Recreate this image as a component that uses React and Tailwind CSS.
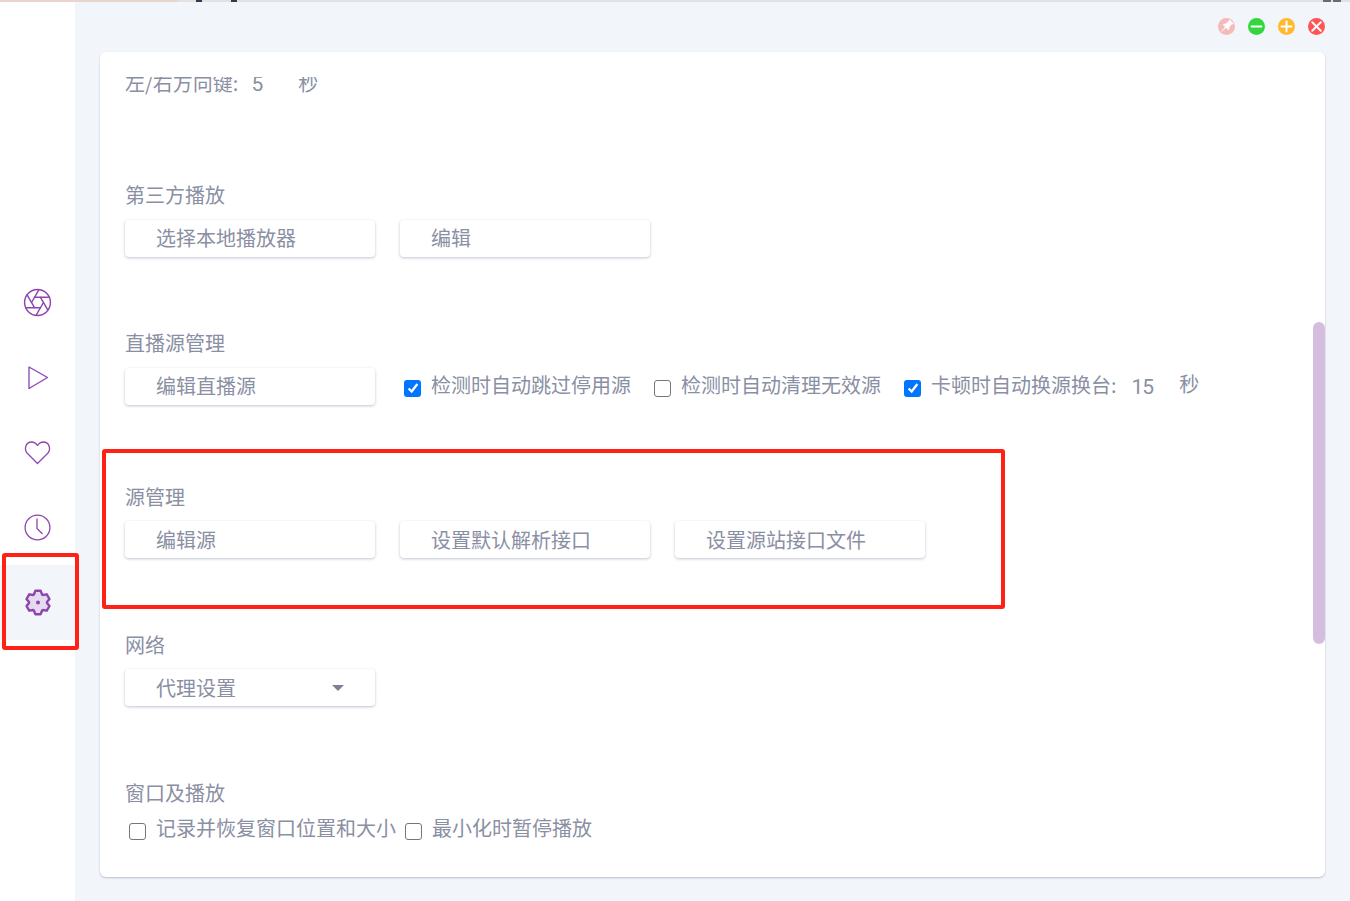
import { Aperture, Minus, Plus, X } from 'lucide-react';

const font = "font-['Noto_Sans_CJK_SC',sans-serif]";
const navColor = '#8e44ad';

// 6-tooth gear outline, centred on 14,14
const gearPath = () => {
  const pts = [];
  for (let i = 0; i < 6; i++) {
    const a = -90 + i * 60;
    [[9, -27], [12, -13], [12, 13], [9, 27]].forEach(([r, d]) => {
      const t = ((a + d) * Math.PI) / 180;
      pts.push(`${(14 + r * Math.cos(t)).toFixed(2)} ${(14 + r * Math.sin(t)).toFixed(2)}`);
    });
  }
  return `M${pts.join('L')}Z`;
};

const NavPlay = () => (
  <svg viewBox="0 0 27 27" className="h-[27px] w-[27px]" fill="none" stroke={navColor} strokeWidth="1.3">
    <path d="M5 3v21.5L23.5 13.5Z" strokeLinejoin="round" />
  </svg>
);

const NavHeart = () => (
  <svg viewBox="0 0 27 27" className="h-[27px] w-[27px]" fill="none" stroke={navColor} strokeWidth="1.3">
    <path d="M13.5 24.5 3 14C0 10.500 1.500 3 7.500 3c3 0 5 2 6 3.500C14.500 5 16.500 3 19.500 3c6 0 7.500 7.500 4.500 11Z" strokeLinejoin="round" />
  </svg>
);

const NavClock = () => (
  <svg viewBox="0 0 27 27" className="h-[27px] w-[27px]" fill="none" stroke={navColor} strokeWidth="1.3">
    <circle cx="13.5" cy="13.5" r="12.400" />
    <path d="M13 4.500v10l5.500 5.500" />
  </svg>
);

const NavAperture = () => <Aperture className="h-[31px] w-[31px]" color={navColor} strokeWidth={1.1} />;

const navItems = [NavAperture, NavPlay, NavHeart, NavClock];

const Button = ({ label, arrow, up }) => (
  <div className={`flex h-[37px] w-[250px] items-center rounded bg-white pl-[31px] text-[20px] leading-none text-[#8a8fa3] shadow-[0_1px_3px_rgba(100,110,140,0.4)] ${up ? 'pb-[2px]' : ''}`}>
    {label}
    {arrow && <span className="ml-auto mr-[31px] h-0 w-0 border-x-[6px] border-t-[6px] border-x-transparent border-t-[#7c8194]" />}
  </div>
);

const Check = ({ on, label }) => (
  <label className="flex items-center">
    {on ? (
      <span className="flex h-[17px] w-[17px] translate-y-[3px] items-center justify-center rounded-[3px] bg-[#0075ff]">
        <svg viewBox="0 0 16 16" className="h-[14px] w-[14px]" fill="none" stroke="white" strokeWidth="2.6">
          <path d="M3 8.500 6.500 12 13 3.500" />
        </svg>
      </span>
    ) : (
      <span className="h-[17px] w-[17px] translate-y-[3px] rounded-[3px] border border-[#767676] bg-white" />
    )}
    <span className="ml-[10px] text-[20px] leading-none text-[#8a8fa3]">{label}</span>
  </label>
);

const Section = ({ title, className, tight, children }) => (
  <div className={className}>
    <div className={`h-[25px] text-[20px] leading-[25px] text-[#8a8fa3] ${tight ? 'mb-[13px]' : 'mb-[12px]'}`}>{title}</div>
    {children}
  </div>
);

const WinButton = ({ color, children }) => (
  <div className={`flex h-[17px] w-[17px] items-center justify-center rounded-full ${color}`}>{children}</div>
);

export default function App() {
  return (
    <div className={`relative flex h-[901px] w-[1350px] flex-col overflow-hidden bg-[#f2f5f9] ${font}`}>
      {/* strip of the window behind */}
      <div className="flex h-[2px] shrink-0 bg-[#e2e2e4]">
        <div className="w-[179px] bg-[#e8d5cc]" />
        <div className="ml-[17px] w-[6px] bg-[#3a3550]" />
        <div className="ml-[29px] w-[6px] bg-[#3a3550]" />
        <div className="ml-auto w-[8px] bg-[#6a6a72]" />
        <div className="ml-[2px] mr-[9px] w-[8px] bg-[#6a6a72]" />
      </div>

      <div className="flex min-h-0 flex-1">
        <aside className="flex w-[75px] shrink-0 flex-col items-center bg-white pt-[263px]">
          {navItems.map((Icon, i) => (
            <div key={i} className="flex h-[75px] w-full items-center justify-center">
              <Icon />
            </div>
          ))}
          <div className="flex h-[75px] w-full items-center justify-center bg-[#f2f5f9]">
            <svg viewBox="0 0.5 28 28" className="h-[28px] w-[28px]" fill="#e6daf0" stroke={navColor} strokeWidth="2.4" strokeLinejoin="round">
              <path d={gearPath()} />
              <circle cx="14" cy="14" r="2" fill={navColor} stroke="none" />
            </svg>
          </div>
        </aside>

        <main className="flex min-w-0 flex-1 flex-col px-[25px]">
          <div className="flex h-[50px] shrink-0 items-center justify-end gap-[13px] pb-[1px]">
            <WinButton color="bg-[#f6b9b9]">
              <svg viewBox="0 0 17 17" className="h-[17px] w-[17px]" fill="white" stroke="white" strokeWidth="0.5">
                <g transform="rotate(45 8.5 8.5)">
                  <path d="M6 1.500h5V3h-.6l.6 4.500L12.500 9.500h-8L6 7.500 6.600 3H6ZM8 9.500h1L8.500 15.500Z" />
                </g>
              </svg>
            </WinButton>
            <WinButton color="bg-[#33d63f]">
              <Minus className="h-[17px] w-[17px] text-white" strokeWidth={2.800} />
            </WinButton>
            <WinButton color="bg-[#ffb92e]">
              <Plus className="h-[17px] w-[17px] text-white" strokeWidth={2.800} />
            </WinButton>
            <WinButton color="bg-[#ff5454]">
              <X className="h-[17px] w-[17px] text-white" strokeWidth={2.800} />
            </WinButton>
          </div>

          <div className="relative h-[825px] overflow-hidden rounded-md bg-white pl-[25px] shadow-[0_1px_2px_rgba(100,110,140,0.4)]">
            {/* first row is cut by the scroller's top edge */}
            <div className="mt-[25px] h-[20px] overflow-hidden">
              <div className="-mt-[7px] flex items-center text-[20px] leading-[25px] text-[#8a8fa3]">
                <span>左/右方向键:</span>
                <span className="ml-[13px] translate-y-[2px] font-['Roboto',sans-serif] text-[21px]">5</span>
                <span className="ml-[35px]">秒</span>
              </div>
            </div>

            <Section title="第三方播放" tight className="mt-[85px]">
              <div className="flex gap-[25px]">
                <Button up label="选择本地播放器" />
                <Button up label="编辑" />
              </div>
            </Section>

            <Section title="直播源管理" tight className="mt-[73px]">
              <div className="flex items-center">
                <Button up label="编辑直播源" />
                <div className="ml-[29px] mb-[3px] flex items-center gap-[23px]">
                  <Check on label="检测时自动跳过停用源" />
                  <Check label="检测时自动清理无效源" />
                  <div className="flex items-center">
                    <Check on label="卡顿时自动换源换台:" />
                    <span className="ml-[15px] mt-[4px] font-['Roboto',sans-serif] text-[21px] leading-none tracking-[-1px] text-[#8a8fa3]">15</span>
                    <span className="ml-[26px] mb-[2px] text-[20px] leading-none text-[#8a8fa3]">秒</span>
                  </div>
                </div>
              </div>
            </Section>

            <Section title="源管理" className="mt-[79px]">
              <div className="flex gap-[25px]">
                <Button label="编辑源" />
                <Button label="设置默认解析接口" />
                <Button label="设置源站接口文件" />
              </div>
            </Section>

            <Section title="网络" className="mt-[74px]">
              <Button label="代理设置" arrow />
            </Section>

            <Section title="窗口及播放" tight className="mt-[74px]">
              <div className="flex items-center gap-[9px] pl-[4px]">
                <Check label="记录并恢复窗口位置和大小" />
                <Check label="最小化时暂停播放" />
              </div>
            </Section>

            {/* scrollbar thumb */}
            <div className="absolute right-0 top-[270px] h-[322px] w-[12px] rounded-full bg-[#d5bde0]" />
          </div>
        </main>
      </div>

      {/* red annotation boxes */}
      <div className="absolute left-[2px] top-[553px] h-[97px] w-[77px] rounded-[3px] border-4 border-[#ff2016]" />
      <div className="absolute left-[102px] top-[449px] h-[160px] w-[903px] rounded-[3px] border-4 border-[#ff2016]" />
    </div>
  );
}
